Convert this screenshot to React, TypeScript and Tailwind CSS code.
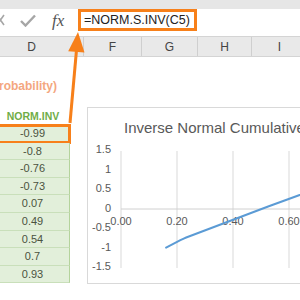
import React from 'react';

const values = ['-0.99', '-0.8', '-0.76', '-0.73', '0.07', '0.49', '0.54', '0.7', '0.93'];

// svg coords: x = 33 + p * 280, y = 72 - v * 39
const linePoints = [
  [0.161, -0.99],
  [0.212, -0.8],
  [0.224, -0.76],
  [0.233, -0.73],
  [0.528, 0.07],
  [0.688, 0.49],
  [0.705, 0.54],
  [0.758, 0.7],
  [0.824, 0.93],
]
  .map(([p, v]) => `${(33 + p * 280).toFixed(1)},${(72 - v * 39).toFixed(1)}`)
  .join(' ');

const yLabels = [
  ['1.5', 13.5],
  ['1', 33],
  ['0.5', 52.5],
  ['0', 72],
  ['-0.5', 91.5],
  ['-1', 111],
  ['-1.5', 130.5],
] as const;

const xLabels = [
  ['0.00', 33],
  ['0.20', 89],
  ['0.40', 145],
  ['0.60', 201],
] as const;

function FormulaBar() {
  return (
    <div className="flex h-[22px] items-center bg-white">
      <svg width="8" height="12" viewBox="0 0 8 12" className="-ml-[3px] shrink-0">
        <path d="M0 1 L7 11 M7 1 L0 11" stroke="#a6a6a6" strokeWidth="1.6" fill="none" />
      </svg>
      <svg width="16" height="13" viewBox="0 0 16 13" className="ml-[15px] shrink-0">
        <path d="M1 7 L5.5 11.5 L15 1.5" stroke="#a6a6a6" strokeWidth="2.4" fill="none" />
      </svg>
      <span className="ml-[16px] w-[20px] font-['Liberation_Serif',serif] text-[17px] italic leading-none text-[#555]">
        fx
      </span>
      <div className="ml-[6px] flex h-full w-[119px] shrink-0 items-center border-[3px] border-[#f7801a] pl-[3px]">
        <span className="whitespace-nowrap text-[12.5px] text-[#222]">=NORM.S.INV(C5)</span>
      </div>
    </div>
  );
}

function ColumnHeaders() {
  const cols = [
    { name: 'F', w: 'w-[58px]' },
    { name: 'G', w: 'w-[56px]' },
    { name: 'H', w: 'w-[54px]' },
    { name: 'I', w: 'w-[56px]' },
  ];
  return (
    <div className="mt-[5px] flex h-[21px] border-y border-[#d4d4d4] bg-[#e9e9e9] text-[12px] text-[#444]">
      <div className="flex w-[84px] shrink-0 items-center justify-center border-r border-[#cfcfcf] pr-[20px]">D</div>
      {cols.map((c) => (
        <div key={c.name} className={`${c.w} flex shrink-0 items-center justify-center border-r border-[#cfcfcf]`}>
          {c.name}
        </div>
      ))}
    </div>
  );
}

function Chart() {
  return (
    <div className="ml-[17px] mt-[50px] h-[177px] w-[240px] shrink-0 border border-[#d9d9d9] bg-white">
      <div className="h-[29px] whitespace-nowrap pl-[36px] pt-[11px] text-[15px] leading-[18px] text-[#595959]">
        Inverse Normal Cumulative Distribution
      </div>
      <svg width="240" height="146" className="block">
        {[33, 89, 145, 201].map((x) => (
          <line key={x} x1={x} y1={14} x2={x} y2={131} stroke="#d9d9d9" strokeWidth="1" />
        ))}
        <line x1={33} y1={72} x2={240} y2={72} stroke="#d0d0d0" strokeWidth="1" />
        {yLabels.map(([t, y]) => (
          <text key={t} x={23} y={y} textAnchor="end" dominantBaseline="middle" fontSize="11" fill="#595959">
            {t}
          </text>
        ))}
        {xLabels.map(([t, x]) => (
          <text key={t} x={x} y={85} textAnchor="middle" dominantBaseline="middle" fontSize="11" fill="#595959">
            {t}
          </text>
        ))}
        <polyline
          points={linePoints}
          fill="none"
          stroke="#5b9bd5"
          strokeWidth="2"
          strokeLinejoin="round"
          strokeLinecap="round"
        />
      </svg>
    </div>
  );
}

function DataColumn() {
  return (
    <div className="w-[70px] shrink-0">
      <div className="mt-[21px] flex h-[16px] w-[57px] justify-end overflow-hidden">
        <span className="whitespace-nowrap text-[12px] font-bold leading-[16px] text-[#f4a77f]">
          (Cumulative probability)
        </span>
      </div>
      <div className="mt-[14px] -ml-[4px] flex h-[17px] w-[74px] items-center justify-center bg-white text-[10.5px] font-bold text-[#70ad47]">
        NORM.INV
      </div>
      <div className="-ml-[4px] w-[74px]">
        {values.map((v, i) => (
          <div
            key={v}
            className="relative flex h-[17.6px] items-center justify-center border-b border-r border-b-[#c9dfba] border-r-[#b4d39c] bg-[#e2efda] text-[11px] text-[#4b5340]"
          >
            {v}
            {i === 0 && <div className="absolute -left-[2px] -top-[1px] h-[20px] w-[77px] border-[3px] border-[#f7801a]" />}
          </div>
        ))}
      </div>
    </div>
  );
}

export default function App() {
  return (
    <div className="relative h-[300px] w-[300px] overflow-hidden bg-white font-['Liberation_Sans',Arial,sans-serif]">
      <div className="h-[9px] bg-[#e6e6e6]" />
      <FormulaBar />
      <div className="bg-[#e6e6e6]">
        <ColumnHeaders />
      </div>
      <div className="flex">
        <DataColumn />
        <Chart />
      </div>
      <svg width="300" height="300" className="pointer-events-none absolute left-0 top-0">
        <line x1={70} y1={123} x2={76.5} y2={50} stroke="#f7801a" strokeWidth="3" />
        <polygon points="78,32 84.5,52.6 68.2,51.2" fill="#f7801a" />
      </svg>
    </div>
  );
}
